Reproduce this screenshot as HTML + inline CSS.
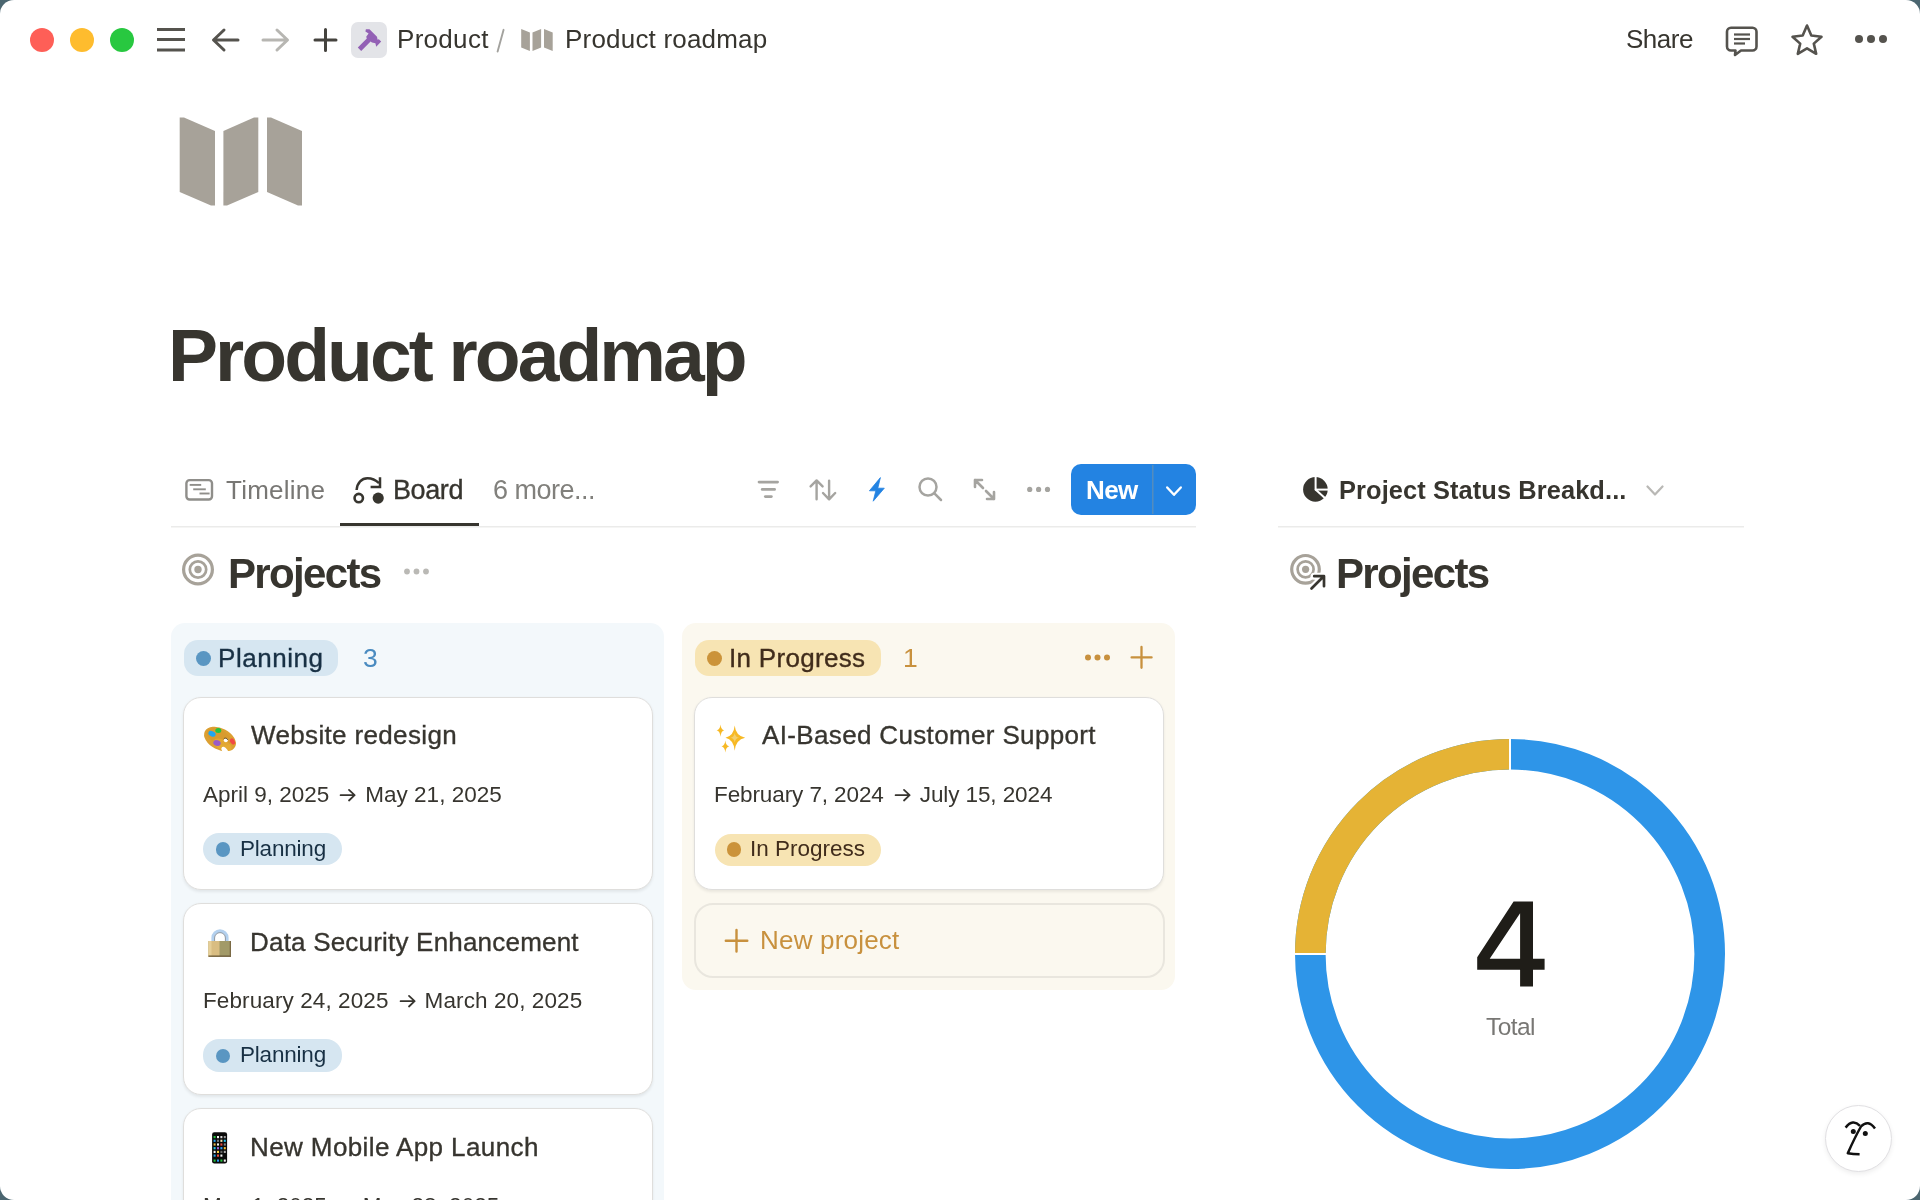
<!DOCTYPE html>
<html><head><meta charset="utf-8">
<style>
html,body{margin:0;padding:0;width:1920px;height:1200px;overflow:hidden;background:#4b6670;}
#win{position:absolute;left:0;top:0;width:1920px;height:1200px;background:#fff;border-radius:14px;overflow:hidden;}
.t{position:absolute;white-space:nowrap;font-family:"Liberation Sans",sans-serif;line-height:1;color:#37352f;will-change:transform;}
.m{-webkit-text-stroke:0.35px currentColor;}
.b{font-weight:bold;}
svg{position:absolute;overflow:visible;}
.abs{position:absolute;}
.card{background:#fff;border-radius:18px;box-sizing:border-box;border:1.5px solid #dfdedc;box-shadow:0 1.5px 3px rgba(15,15,15,0.07);}
.pillb{height:32.7px;border-radius:16px;background:#d6e6f1;}
.dotb{width:14.5px;height:14.5px;border-radius:50%;background:#5a96c2;}
.pbt{font-size:22.5px;color:#183044;letter-spacing:-0.2px;}
.ttl{font-size:26px;-webkit-text-stroke:0.35px #37352f;}
.dt{font-size:22.5px;}
svg.arr{position:static;display:inline-block;vertical-align:0px;}
</style></head><body>
<div id="win">

<!-- ===== TITLE BAR ===== -->
<div class="abs" style="left:30px;top:28px;width:24px;height:24px;border-radius:50%;background:#fe5f57;"></div>
<div class="abs" style="left:70px;top:28px;width:24px;height:24px;border-radius:50%;background:#febc2e;"></div>
<div class="abs" style="left:110px;top:28px;width:24px;height:24px;border-radius:50%;background:#28c840;"></div>

<svg style="left:0;top:0" width="1920" height="80">
  <!-- hamburger -->
  <g stroke="#55534e" stroke-width="3" stroke-linecap="butt">
    <line x1="157" y1="29.5" x2="185" y2="29.5"/>
    <line x1="157" y1="39.5" x2="185" y2="39.5"/>
    <line x1="157" y1="50" x2="185" y2="50"/>
  </g>
  <!-- back arrow -->
  <g stroke="#55534e" stroke-width="3" fill="none" stroke-linecap="round" stroke-linejoin="round">
    <path d="M238 40 H214 M224 30 L213.5 40 L224 50"/>
  </g>
  <!-- forward arrow -->
  <g stroke="#b7b6b2" stroke-width="3" fill="none" stroke-linecap="round" stroke-linejoin="round">
    <path d="M263 40 H287 M277 30 L287.5 40 L277 50"/>
  </g>
  <!-- plus -->
  <g stroke="#45433e" stroke-width="3" stroke-linecap="round">
    <path d="M325.5 29.5 V50.5 M315 40 H336"/>
  </g>
  <!-- hammer box -->
  <rect x="351" y="22" width="36" height="36" rx="7" fill="#e3e4e8"/>
  <path fill="#9361b5" d="M365.9 29.2 L369.5 29.2 L377 36.8 L377.6 39.8 L378.8 39.2 L381.2 41.6 L376.2 46.8 L375.4 43.2 L372 42.6 L370.6 41.6 L361.2 51 L357.8 47.6 L366.8 38.6 L366.2 36.8 L368.6 33.6 L365.4 31.4 Z"/>
  <!-- small map icon -->
  <g fill="#a7a299">
    <path d="M521.2 28.9 L529.9 32.4 L529.9 51 L521.2 47.6 Z"/>
    <path d="M532.5 32.4 L541.1 28.9 L541.1 47.6 L532.5 51 Z"/>
    <path d="M544 28.9 L552.7 32.4 L552.7 51 L544 47.6 Z"/>
  </g>
  <!-- comment icon -->
  <g stroke="#55534e" stroke-width="2.6" fill="none" stroke-linejoin="round">
    <path d="M1731 27.8 H1752.5 A4 4 0 0 1 1756.5 31.8 V46.5 A4 4 0 0 1 1752.5 50.5 H1741 L1735 55 L1735.5 50.5 H1731 A4 4 0 0 1 1727 46.5 V31.8 A4 4 0 0 1 1731 27.8 Z"/>
  </g>
  <g stroke="#55534e" stroke-width="2.2">
    <line x1="1734" y1="34.5" x2="1750" y2="34.5"/>
    <line x1="1734" y1="39" x2="1750" y2="39"/>
    <line x1="1734" y1="43.5" x2="1745" y2="43.5"/>
  </g>
  <!-- star -->
  <path d="M1807 25.5 L1811.3 35.5 L1821.5 36.8 L1813.8 43.6 L1816.2 53.8 L1807 48.3 L1797.8 53.8 L1800.2 43.6 L1792.5 36.8 L1802.7 35.5 Z" fill="none" stroke="#55534e" stroke-width="2.6" stroke-linejoin="round"/>
  <!-- dots -->
  <g fill="#55534e">
    <circle cx="1859" cy="39" r="4"/>
    <circle cx="1871" cy="39" r="4"/>
    <circle cx="1883" cy="39" r="4"/>
  </g>
</svg>

<div class="t" style="left:397px;top:26px;font-size:26px;letter-spacing:0.3px;">Product</div>
<svg style="left:0;top:0" width="600" height="80"><line x1="503.6" y1="29.8" x2="497.6" y2="51.6" stroke="#a3a29e" stroke-width="1.9" stroke-linecap="round"/></svg>
<div class="t" style="left:565px;top:26px;font-size:26px;letter-spacing:0.2px;">Product roadmap</div>
<div class="t" style="left:1626px;top:26px;font-size:26px;letter-spacing:-0.5px;">Share</div>

<!-- ===== PAGE ICON + TITLE ===== -->
<svg style="left:0;top:0" width="400" height="220">
  <g fill="#a7a299">
    <path d="M179.7 117.5 L184 117.5 L215 131 L215 205.5 L211 205.5 L179.7 192 Z"/>
    <path d="M223.4 131 L254 117.5 L258.3 117.5 L258.3 192 L227 205.5 L223.4 205.5 Z"/>
    <path d="M267 117.5 L271 117.5 L302 131 L302 205.5 L298 205.5 L267 192 Z"/>
  </g>
</svg>
<div class="t b" style="left:168px;top:318px;font-size:75px;letter-spacing:-2.95px;">Product roadmap</div>

<!-- ===== TABS ===== -->
<svg style="left:0;top:0" width="1920" height="620">
  <!-- timeline icon -->
  <rect x="186.4" y="480.1" width="25.6" height="19.4" rx="3.2" fill="none" stroke="#8f8e8a" stroke-width="2.4"/>
  <g stroke="#8f8e8a" stroke-width="1.9">
    <line x1="189.7" y1="484.9" x2="201.2" y2="484.9"/>
    <line x1="193.2" y1="489.3" x2="205.8" y2="489.3"/>
    <line x1="199.5" y1="493.5" x2="209.6" y2="493.5"/>
  </g>
  <!-- board icon -->
  <g fill="none" stroke="#37352f" stroke-width="2.5" stroke-linejoin="miter">
    <path d="M356.6 490 C357.2 482.5 361.8 478.2 367.5 478.2 C372 478.2 375.5 479.8 379 483.2"/>
    <path d="M380 477.2 V487 H370.6"/>
    <circle cx="358.75" cy="498.1" r="4.2" stroke-width="2.6"/>
  </g>
  <circle cx="378.2" cy="498.1" r="5.6" fill="#37352f"/>
  <!-- tab underline & separators -->
  <rect x="340" y="523" width="139" height="3" fill="#37352f"/>
  <rect x="171" y="526" width="1025" height="1.5" fill="#ebebea"/>
  <rect x="1278" y="526" width="466" height="1.5" fill="#ebebea"/>

  <!-- toolbar: filter -->
  <g stroke="#a5a4a0" stroke-width="2.7" stroke-linecap="round">
    <line x1="759" y1="482.1" x2="777.6" y2="482.1"/>
    <line x1="762.2" y1="489.4" x2="774.6" y2="489.4"/>
    <line x1="765.3" y1="496.6" x2="771.4" y2="496.6"/>
  </g>
  <!-- sort -->
  <g stroke="#a5a4a0" stroke-width="2.4" fill="none" stroke-linecap="round" stroke-linejoin="round">
    <path d="M816.6 499.2 V480.6 M810.6 486.4 L816.6 480.4 L822.6 486.4"/>
    <path d="M829.1 480.6 V499.2 M823 493 L829.1 499.4 L835.2 493"/>
  </g>
  <!-- bolt -->
  <path fill="#2383e2" stroke="#2383e2" stroke-width="0.8" stroke-linejoin="round" d="M880.4 477.6 L869.4 490.8 L875.8 490.8 L873.2 501.2 L884.3 488.2 L877.8 488.2 Z"/>
  <!-- search -->
  <g stroke="#a5a4a0" stroke-width="2.5" fill="none" stroke-linecap="round">
    <circle cx="928" cy="487" r="8.5"/>
    <line x1="934.4" y1="493.4" x2="941" y2="500"/>
  </g>
  <!-- expand -->
  <g stroke="#a5a4a0" stroke-width="2.6" fill="none" stroke-linecap="round" stroke-linejoin="round">
    <path d="M975 480 L983 488 M975 480 V487 M975 480 H982"/>
    <path d="M994 499 L986 491 M994 499 V492 M994 499 H987"/>
  </g>
  <!-- dots -->
  <g fill="#a5a4a0">
    <circle cx="1029.7" cy="489.4" r="2.6"/>
    <circle cx="1038.6" cy="489.4" r="2.6"/>
    <circle cx="1047.5" cy="489.4" r="2.6"/>
  </g>
  <!-- New button -->
  <rect x="1071" y="464" width="125" height="51" rx="10" fill="#2383e2"/>
  <line x1="1152.8" y1="465" x2="1152.8" y2="514" stroke="#5c8fb8" stroke-width="1.3"/>
  <path d="M1167.2 487.5 L1174 494.8 L1180.8 487.5" fill="none" stroke="#fff" stroke-width="2.4" stroke-linecap="round" stroke-linejoin="round"/>

  <!-- right panel: pie icon -->
  <circle cx="1315.4" cy="489.4" r="12.3" fill="#37352f"/>
  <g stroke="#fff" stroke-width="2">
    <line x1="1315.6" y1="476" x2="1315.6" y2="490"/>
    <line x1="1315" y1="489.6" x2="1329" y2="489.6"/>
    <line x1="1315.2" y1="489.2" x2="1326" y2="499"/>
  </g>
  <path d="M1647.5 486.5 L1655 494.5 L1662.5 486.5" fill="none" stroke="#b9b8b5" stroke-width="2.2" stroke-linecap="round" stroke-linejoin="round"/>

  <!-- Projects target icon (left) -->
  <g fill="none" stroke="#a7a299">
    <circle cx="198" cy="569.5" r="14.4" stroke-width="3.2"/>
    <circle cx="198" cy="569.5" r="8.2" stroke-width="2.7"/>
  </g>
  <circle cx="198" cy="569.5" r="3.7" fill="#a7a299"/>
  <!-- dots -->
  <g fill="#bab9b5">
    <circle cx="407" cy="571.5" r="2.9"/>
    <circle cx="416.5" cy="571.5" r="2.9"/>
    <circle cx="426" cy="571.5" r="2.9"/>
  </g>
  <!-- Projects target icon (right, with arrow) -->
  <g fill="none" stroke="#a7a299">
    <circle cx="1305.5" cy="569.3" r="13.8" stroke-width="3.2"/>
    <circle cx="1305.6" cy="569.3" r="8" stroke-width="2.7"/>
  </g>
  <circle cx="1305.6" cy="569.3" r="3.6" fill="#a7a299"/>
  <g fill="none" stroke="#fff" stroke-width="7" stroke-linecap="round" stroke-linejoin="round">
    <path d="M1311 589 L1323.5 576.5 M1314 576.2 H1324 V586.5"/>
  </g>
  <g fill="none" stroke="#37352f" stroke-width="2.7" stroke-linecap="round" stroke-linejoin="round">
    <path d="M1311.5 588.5 L1323.5 576.5 M1314.2 576.2 H1324 V586.2"/>
  </g>
</svg>

<div class="t" style="left:226px;top:477px;font-size:26px;color:#787774;letter-spacing:0.25px;">Timeline</div>
<div class="t m" style="left:393px;top:477px;font-size:27px;letter-spacing:-0.4px;">Board</div>
<div class="t" style="left:493px;top:477px;font-size:27px;color:#81807c;letter-spacing:-0.5px;">6 more...</div>
<div class="t b" style="left:1085.5px;top:477px;font-size:26px;color:#fff;letter-spacing:-0.6px;">New</div>
<div class="t b" style="left:1339px;top:478px;font-size:25.4px;letter-spacing:0.1px;">Project Status Breakd...</div>
<div class="t b" style="left:228px;top:553px;font-size:42px;letter-spacing:-1.65px;">Projects</div>
<div class="t b" style="left:1336px;top:553px;font-size:42px;letter-spacing:-1.65px;">Projects</div>

<!-- ===== BOARD ===== -->
<div class="abs" style="left:171px;top:623px;width:493px;height:620px;border-radius:14px;background:#f3f8fb;"></div>
<div class="abs" style="left:682px;top:623px;width:493px;height:367px;border-radius:14px;background:#fbf8ef;"></div>

<!-- Planning header -->
<div class="abs" style="left:184px;top:640px;width:154px;height:36px;border-radius:14px;background:#d6e6f1;"></div>
<div class="abs" style="left:196px;top:650.5px;width:15px;height:15px;border-radius:50%;background:#5a96c2;"></div>
<div class="t m" style="left:218px;top:644.5px;font-size:26px;color:#183044;letter-spacing:0.55px;">Planning</div>
<div class="t" style="left:363px;top:644.5px;font-size:26.5px;color:#4a8bc0;">3</div>

<!-- In Progress header -->
<div class="abs" style="left:695px;top:640px;width:186px;height:36px;border-radius:14px;background:#f7e4b3;"></div>
<div class="abs" style="left:707px;top:650.5px;width:15px;height:15px;border-radius:50%;background:#cb933a;"></div>
<div class="t m" style="left:729px;top:644.5px;font-size:26px;color:#402c1b;letter-spacing:0.3px;">In Progress</div>
<div class="t" style="left:903px;top:644.5px;font-size:26.5px;color:#c8913e;">1</div>
<svg style="left:0;top:0" width="1200" height="700">
  <g fill="#c8913e">
    <circle cx="1088" cy="657.5" r="3"/>
    <circle cx="1097.5" cy="657.5" r="3"/>
    <circle cx="1107" cy="657.5" r="3"/>
  </g>
  <path d="M1141.5 647 V667.8 M1131.6 657.4 H1151.6" stroke="#c8913e" stroke-width="2.3" stroke-linecap="round"/>
</svg>

<!-- Cards -->
<div class="abs card" style="left:183px;top:696.5px;width:470px;height:193.5px;"></div>
<div class="abs card" style="left:183px;top:903px;width:470px;height:192px;"></div>
<div class="abs card" style="left:183px;top:1108px;width:470px;height:200px;"></div>
<div class="abs card" style="left:694px;top:696.5px;width:470px;height:193.5px;"></div>
<div class="abs" style="left:693.5px;top:903px;width:471px;height:75px;box-sizing:border-box;border:2px solid #e9e6de;border-radius:19px;"></div>

<!-- card 1 -->
<div class="t ttl" style="left:251px;top:722px;letter-spacing:0.35px;">Website redesign</div>
<div class="t dt" style="left:203px;top:783.5px;">April 9, 2025<svg class="arr" width="36" height="14" viewBox="0 0 36 14"><path d="M11.6 7.2 H25.6 M20 1.9 L25.6 7.2 L20 12.5" fill="none" stroke="#37352f" stroke-width="1.8" stroke-linecap="round" stroke-linejoin="round"/></svg>May 21, 2025</div>
<div class="abs pillb" style="left:203.3px;top:832.8px;width:139px;"></div>
<div class="abs dotb" style="left:215.8px;top:842.3px;"></div>
<div class="t pbt" style="left:239.5px;top:838px;">Planning</div>

<!-- card 2 -->
<div class="t ttl" style="left:249.5px;top:928.5px;letter-spacing:0.2px;">Data Security Enhancement</div>
<div class="t dt" style="left:203px;top:990px;letter-spacing:0.1px;">February 24, 2025<svg class="arr" width="36" height="14" viewBox="0 0 36 14"><path d="M11.6 7.2 H25.6 M20 1.9 L25.6 7.2 L20 12.5" fill="none" stroke="#37352f" stroke-width="1.8" stroke-linecap="round" stroke-linejoin="round"/></svg>March 20, 2025</div>
<div class="abs pillb" style="left:203.3px;top:1039px;width:139px;"></div>
<div class="abs dotb" style="left:215.8px;top:1048.5px;"></div>
<div class="t pbt" style="left:239.5px;top:1044.2px;">Planning</div>

<!-- card 3 -->
<div class="t ttl" style="left:249.5px;top:1133.5px;letter-spacing:0.4px;">New Mobile App Launch</div>
<div class="t dt" style="left:203px;top:1195px;">May 1, 2025<svg class="arr" width="36" height="14" viewBox="0 0 36 14"><path d="M11.6 7.2 H25.6 M20 1.9 L25.6 7.2 L20 12.5" fill="none" stroke="#37352f" stroke-width="1.8" stroke-linecap="round" stroke-linejoin="round"/></svg>May 28, 2025</div>

<!-- IP card -->
<div class="t ttl" style="left:762px;top:722px;letter-spacing:0.35px;">AI-Based Customer Support</div>
<div class="t dt" style="left:714px;top:783.5px;letter-spacing:-0.1px;">February 7, 2024<svg class="arr" width="36" height="14" viewBox="0 0 36 14"><path d="M11.6 7.2 H25.6 M20 1.9 L25.6 7.2 L20 12.5" fill="none" stroke="#37352f" stroke-width="1.8" stroke-linecap="round" stroke-linejoin="round"/></svg>July 15, 2024</div>
<div class="abs" style="left:715px;top:833.5px;width:166px;height:32.5px;border-radius:16px;background:#f7e4b3;"></div>
<div class="abs" style="left:726.8px;top:842.3px;width:14.5px;height:14.5px;border-radius:50%;background:#cb933a;"></div>
<div class="t" style="left:750px;top:838px;font-size:22.5px;color:#402c1b;">In Progress</div>

<!-- emojis -->
<svg style="left:0;top:0" width="1200" height="1200">
  <!-- palette -->
  <g transform="translate(220 739) rotate(27)">
    <ellipse cx="0" cy="0" rx="17" ry="10.8" fill="#dca032"/>
    <ellipse cx="-2" cy="-1.5" rx="13" ry="7" fill="#d4962c" opacity="0.5"/><ellipse cx="5" cy="4" rx="10" ry="5" fill="#efb936" opacity="0.45"/>
  </g>
  <ellipse cx="225" cy="751" rx="2.6" ry="4.8" transform="rotate(-35 225 751)" fill="#fff"/>
  <circle cx="225.8" cy="740.2" r="2" fill="#fff"/>
  <path d="M223.8 738.8 A2.2 2.2 0 0 1 227.6 740" fill="none" stroke="#3a2a10" stroke-width="0.7"/>
  <ellipse cx="212" cy="733.8" rx="3.8" ry="2.6" transform="rotate(25 212 733.8)" fill="#1fa6f0"/>
  <ellipse cx="218.3" cy="730.5" rx="3" ry="2.5" fill="#23c43f"/>
  <ellipse cx="217" cy="743" rx="3.8" ry="2.8" transform="rotate(20 217 743)" fill="#9a5cc6"/>
  <ellipse cx="232.5" cy="741.5" rx="2.2" ry="3.3" transform="rotate(-30 232.5 741.5)" fill="#f24a45"/>

  <!-- lock -->
  <path d="M213 941.5 V937.8 A7 7 0 0 1 227 937.8 V941.5" fill="none" stroke="#b3d0ee" stroke-width="3.2"/>
  <path d="M214.6 941.5 V938 A5.4 5.4 0 0 1 225.4 938 V941.5" fill="none" stroke="#7d848c" stroke-width="0.8"/>
  <rect x="208.5" y="941" width="22.5" height="15.7" fill="#a29a68"/>
  <rect x="208.5" y="941" width="11" height="15.7" fill="#d9bd82"/>
  <rect x="208.5" y="941" width="3" height="15.7" fill="#e6cf98"/>
  <rect x="208.5" y="955.5" width="22.5" height="1.3" fill="#6b5a3a"/>
  <rect x="229.7" y="941" width="1.3" height="15.7" fill="#7a6a45"/>

  <!-- phone -->
  <rect x="212.1" y="1132.2" width="15" height="31.2" rx="2.2" fill="#0b0b0b"/>
  <g>
    <rect x="213.6" y="1136" width="2" height="2.2" fill="#22c43a"/><rect x="217" y="1136" width="2" height="2.2" fill="#f4f4f4"/><rect x="220.4" y="1136" width="2" height="2.2" fill="#d8d8d8"/><rect x="223.8" y="1136" width="2" height="2.2" fill="#9a9a9a"/>
    <rect x="213.6" y="1139.7" width="2" height="2.2" fill="#2a9df4"/><rect x="217" y="1139.7" width="2" height="2.2" fill="#777"/><rect x="220.4" y="1139.7" width="2" height="2.2" fill="#f0e0b0"/><rect x="223.8" y="1139.7" width="2" height="2.2" fill="#22c6f0"/>
    <rect x="213.6" y="1143.4" width="2" height="2.2" fill="#e8b84a"/><rect x="217" y="1143.4" width="2" height="2.2" fill="#f4f4f4"/><rect x="220.4" y="1143.4" width="2" height="2.2" fill="#e84a3a"/><rect x="223.8" y="1143.4" width="2" height="2.2" fill="#888"/>
    <rect x="213.6" y="1147.1" width="2" height="2.2" fill="#22c6f0"/><rect x="217" y="1147.1" width="2" height="2.2" fill="#a060d8"/><rect x="220.4" y="1147.1" width="2" height="2.2" fill="#2a9df4"/><rect x="223.8" y="1147.1" width="2" height="2.2" fill="#f8c030"/>
    <rect x="213.6" y="1150.8" width="2" height="2.2" fill="#f4f4f4"/><rect x="217" y="1150.8" width="2" height="2.2" fill="#f8d040"/><rect x="220.4" y="1150.8" width="2" height="2.2" fill="#666"/><rect x="223.8" y="1150.8" width="2" height="2.2" fill="#aaa"/>
    <rect x="213.6" y="1154.5" width="2" height="2.2" fill="#2aa0e8"/><rect x="217" y="1154.5" width="2" height="2.2" fill="#f04a40"/><rect x="220.4" y="1154.5" width="2" height="2.2" fill="#f4f4f4"/>
    <rect x="213.6" y="1159.5" width="2" height="2.2" fill="#22c43a"/><rect x="217" y="1159.5" width="2" height="2.2" fill="#2a9df4"/><rect x="220.4" y="1159.5" width="2" height="2.2" fill="#22c43a"/><rect x="223.8" y="1159.5" width="2" height="2.2" fill="#f4f4f4"/>
  </g>

  <!-- sparkles -->
  <g fill="#f7b924">
    <path d="M734.7 725.5 Q735.6 735.8 745.2 737.7 Q735.6 739.6 734.7 750.8 Q733.8 739.6 725.5 737.7 Q733.8 735.8 734.7 725.5 Z"/>
    <path d="M720.5 724.5 Q721 729.6 724.2 730.3 Q721 731 720.5 736.8 Q720 731 716.6 730.3 Q720 729.6 720.5 724.5 Z"/>
    <path d="M725.3 740.5 Q725.8 745.6 729.3 746.3 Q725.8 747 725.3 752.5 Q724.8 747 721.5 746.3 Q724.8 745.6 725.3 740.5 Z"/>
  </g>
  <path d="M734.7 733 Q735.2 737 739 737.7 Q735.2 738.4 734.7 742.5 Q734.2 738.4 730.5 737.7 Q734.2 737 734.7 733 Z" fill="#f3cf6e"/>
</svg>

<!-- New project -->
<svg style="left:0;top:0" width="1200" height="1000">
  <path d="M736.5 930 V951.5 M725.8 940.7 H747.3" stroke="#c8913e" stroke-width="2.4" stroke-linecap="round"/>
</svg>
<div class="t" style="left:759.5px;top:927px;font-size:26px;color:#c8913e;letter-spacing:0.2px;">New project</div>

<!-- ===== DONUT ===== -->
<svg style="left:0;top:0" width="1920" height="1200">
  <circle cx="1510" cy="954" r="199.7" fill="none" stroke="#2e95e8" stroke-width="30.6"/>
  <path d="M1310.3 954 A199.7 199.7 0 0 1 1510 754.3" fill="none" stroke="#e5b335" stroke-width="30.6"/>
  <line x1="1510" y1="736" x2="1510" y2="772" stroke="#fff" stroke-width="2"/>
  <line x1="1292" y1="954" x2="1328" y2="954" stroke="#fff" stroke-width="2"/>
</svg>
<svg style="left:0;top:0" width="1920" height="1200">
  <path fill-rule="evenodd" fill="#1f1d18" d="M1533 901.4 L1513.6 901.4 L1477.2 957.2 L1477.2 969.8 L1520.1 969.8 L1520.1 986.6 L1533 986.6 L1533 969.8 L1544.6 969.8 L1544.6 958.7 L1533 958.7 Z M1520.1 913.3 L1520.1 958.7 L1489.7 958.7 Z"/>
</svg>
<div class="t" style="left:1486.2px;top:1015px;font-size:24.5px;color:#787774;letter-spacing:-0.6px;">Total</div>

<!-- help button -->
<div class="abs" style="left:1825px;top:1104.5px;width:67px;height:67px;border-radius:50%;background:#fff;box-sizing:border-box;border:1.2px solid #e0dfe2;box-shadow:0 2px 5px rgba(0,0,0,0.07);"></div>
<svg style="left:0;top:0" width="1920" height="1200">
  <g fill="none" stroke="#111" stroke-width="2.5" stroke-linecap="butt" stroke-linejoin="round">
    <path d="M1845.6 1127.6 Q1852.8 1118.5 1860 1125.8"/>
    <path d="M1875 1128.4 Q1868 1119 1861 1126.5 Q1855 1137 1847.8 1153.2 Q1853 1154.2 1859.6 1154.3"/>
  </g>
  <circle cx="1853.3" cy="1131.6" r="2.5" fill="#111"/>
  <circle cx="1865.3" cy="1133.6" r="2.5" fill="#111"/>
</svg>

</div>
</body></html>
